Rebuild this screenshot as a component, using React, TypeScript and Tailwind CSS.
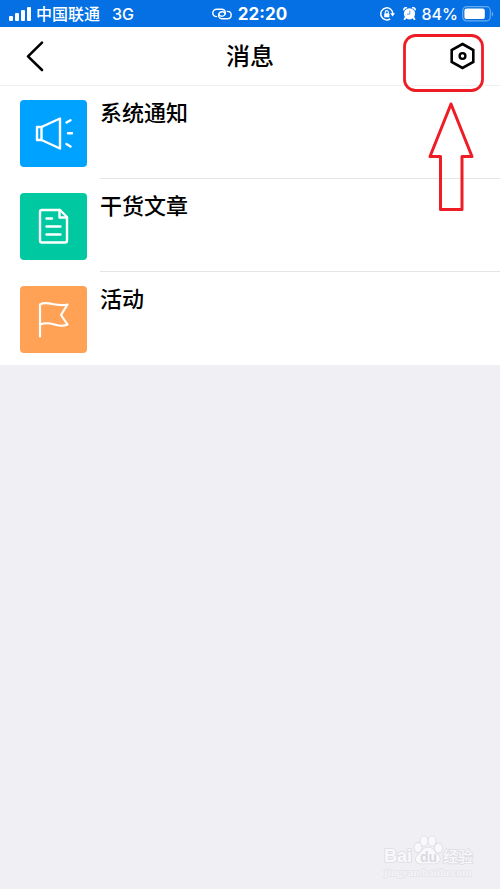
import type { ReactNode } from 'react';

function SignalIcon() {
  return (
    <svg width="22" height="16" viewBox="0 0 22 16" fill="#fff" aria-hidden="true">
      <rect x="0" y="10" width="4" height="5" rx="1" />
      <rect x="6" y="7" width="4" height="8" rx="1" />
      <rect x="12" y="4" width="4" height="11" rx="1" />
      <rect x="18" y="1" width="4" height="14" rx="1" />
    </svg>
  );
}

function LinkIcon() {
  return (
    <svg width="20" height="12" viewBox="0 0 20 12" fill="none" stroke="#fff" strokeWidth="1.4" strokeLinecap="round" aria-hidden="true">
      <path d="M4.6 8.6C2.2 8.6 0.8 7 0.8 4.9C0.8 2.6 2.6 1.2 4.8 1.2H9.4C12 1.2 13.6 3 13.4 5C13.2 7 11.6 8.2 9.6 8.2C8.2 8.2 7.4 7.4 7.2 6.6" />
      <path d="M15.4 3.4C17.8 3.4 19.2 5 19.2 7.1C19.2 9.4 17.4 10.8 15.2 10.8H10.6C8 10.8 6.4 9 6.6 7C6.8 5 8.4 3.8 10.4 3.8C11.8 3.8 12.6 4.6 12.8 5.4" />
    </svg>
  );
}

function RotationLockIcon() {
  return (
    <svg width="15" height="14" viewBox="0 0 15 14" fill="none" stroke="#fff" strokeWidth="1.5" aria-hidden="true">
      <path d="M10.2 11.8A6 6 0 1 1 12.8 7" />
      <path d="M10.2 6.2H15L12.6 9.6Z" fill="#fff" stroke="none" />
      <rect x="4.2" y="6.2" width="5.2" height="4" rx="0.6" fill="#fff" stroke="none" />
      <path d="M5.3 6.4V5.1A1.5 1.5 0 0 1 8.3 5.1V6.4" strokeWidth="1.1" />
    </svg>
  );
}

function AlarmIcon() {
  return (
    <svg width="13" height="13" viewBox="0 0 13 13" aria-hidden="true">
      <circle cx="6.5" cy="6.8" r="5.6" fill="#fff" />
      <path d="M0.9 3.4A2.2 2.2 0 0 1 3.9 0.9M9.1 0.9A2.2 2.2 0 0 1 12.1 3.4" fill="none" stroke="#fff" strokeWidth="1.6" />
      <path d="M2.6 10.6L1.5 12.2M10.4 10.6L11.5 12.2" stroke="#fff" strokeWidth="1.8" strokeLinecap="round" />
      <path d="M6.8 3.6V7.2H4" fill="none" stroke="#5ba2ee" strokeWidth="1" />
    </svg>
  );
}

function BatteryIcon() {
  return (
    <svg width="32" height="16" viewBox="0 0 32 16" aria-hidden="true">
      <rect x="0.7" y="0.7" width="27.6" height="14.2" rx="4" fill="none" stroke="#68a9ef" strokeWidth="1.2" />
      <rect x="2.4" y="2.5" width="20.4" height="10.6" rx="2.2" fill="#fff" />
      <path d="M29.8 5.4A2.8 2.8 0 0 1 29.8 10.4Z" fill="#68a9ef" />
    </svg>
  );
}

function StatusBar() {
  return (
    <div className="grid grid-cols-[1fr_auto_1fr] items-center h-[27px] pl-[9px] pr-[6px] bg-[#0470e4] text-white">
      <div className="flex items-center">
        <SignalIcon />
        <span className="ml-[5px] text-base leading-5 font-medium">中国联通</span>
        <span className="ml-3 text-base leading-5 font-medium">3G</span>
      </div>
      <div className="flex items-center gap-[6px] pr-1">
        <LinkIcon />
        <span className="text-[17px] leading-5 font-bold">22:20</span>
      </div>
      <div className="flex items-center justify-end">
        <RotationLockIcon />
        <span className="ml-2">
          <AlarmIcon />
        </span>
        <span className="ml-[6px] mr-1 text-base leading-5 font-medium">84%</span>
        <BatteryIcon />
      </div>
    </div>
  );
}

function Header() {
  return (
    <header className="flex items-center justify-between h-[59px] pl-[26px] pr-6 border-b border-[#efefef] bg-white">
      <button type="button" aria-label="返回" className="cursor-pointer">
        <svg width="26" height="32" viewBox="0 0 26 32" fill="none" stroke="#000" strokeWidth="2.6" strokeLinecap="round" strokeLinejoin="round">
          <path d="M16 2.6L2 16.4L16 30" />
        </svg>
      </button>
      <h1 className="pt-0.5 text-2xl font-medium">消息</h1>
      <button type="button" aria-label="设置" className="relative cursor-pointer">
        <svg width="28" height="28" viewBox="0 0 28 28" fill="none" stroke="#000" strokeLinejoin="miter">
          <path d="M14.5 2L25.3 8V20L14.5 26L3.7 20V8Z" strokeWidth="2.6" />
          <circle cx="14.5" cy="14" r="2.9" strokeWidth="2.4" />
        </svg>
        {/* highlight frame and arrow around the settings button */}
        <svg className="absolute -top-2 -right-2 pointer-events-none" width="84" height="180" viewBox="0 0 84 180" fill="none" stroke="#ee1c25" strokeWidth="3" aria-hidden="true">
          <rect x="4.5" y="1.5" width="78" height="55" rx="11" strokeWidth="2.8" />
          <path d="M51 70L30 122.5H40.5V175.5H62V122.5H72Z" strokeLinejoin="round" />
        </svg>
      </button>
    </header>
  );
}

function MegaphoneIcon() {
  return (
    <svg width="67" height="67" viewBox="0 0 67 67" fill="none" stroke="#fff" strokeWidth="2.4" strokeLinecap="round" strokeLinejoin="round" aria-hidden="true">
      <path d="M17 27H21.5V40H17Z" />
      <path d="M21.5 27L40 18.5V48.5L21.5 40" />
      <path d="M46.5 22.5L50.5 20.2M48 33.3H52M46.5 44L50.5 46.5" />
    </svg>
  );
}

function ArticleIcon() {
  return (
    <svg width="67" height="67" viewBox="0 0 67 67" fill="none" stroke="#fff" strokeWidth="2.4" strokeLinecap="round" strokeLinejoin="round" aria-hidden="true">
      <path d="M40 17H22A2 2 0 0 0 20 19V47.5A2 2 0 0 0 22 49.5H45A2 2 0 0 0 47 47.5V24Z" />
      <path d="M39.5 17V24.5H46.5" />
      <path d="M26.5 25.5H32M26.5 33.5H40.5M26.5 41.5H40.5" />
    </svg>
  );
}

function FlagIcon() {
  return (
    <svg width="67" height="67" viewBox="0 0 67 67" fill="none" stroke="#fff" strokeWidth="2.2" strokeLinecap="round" strokeLinejoin="round" aria-hidden="true">
      <path d="M20 50.5V18.5C28 14 35 21.5 47.5 18.5L41 29L47.5 38.5C38 43.5 31 33.5 20.5 38.5" />
    </svg>
  );
}

type MessageRowProps = {
  title: string;
  color: string;
  icon: ReactNode;
  last?: boolean;
};

function MessageRow({ title, color, icon, last }: MessageRowProps) {
  return (
    <li>
      <a href="#" className="flex h-[93px] pl-5">
        <div className={`w-[67px] h-[67px] mt-[14px] rounded ${color}`}>{icon}</div>
        <div className={`flex-1 ml-[13px] pt-3 ${last ? '' : 'border-b border-[#e5e5e5]'}`}>
          <span className="block text-[22px] leading-[30px] font-medium">{title}</span>
        </div>
      </a>
    </li>
  );
}

function Watermark() {
  return (
    <svg width="94" height="46" viewBox="0 0 94 46" fill="#f9f9fb" stroke="#dddde2" strokeWidth="1.6" paintOrder="stroke" aria-hidden="true">
      <ellipse cx="36" cy="12.5" rx="3.6" ry="4.6" />
      <ellipse cx="42" cy="6" rx="3.6" ry="4.8" />
      <ellipse cx="50" cy="6" rx="3.6" ry="4.8" />
      <ellipse cx="56.5" cy="13" rx="3.6" ry="4.6" />
      <path d="M46 12.5C51 12.5 52 17 56 20C60 24 57 29 52 28.5H40C34 29 32 24 36 20C40 17 41 12.5 46 12.5Z" />
      <text x="2" y="27" fontSize="18" fontWeight="700" className="font-['Liberation_Sans',sans-serif]">Bai</text>
      <text x="38" y="27" fontSize="14" fontWeight="700" fill="#d9d9df" stroke="none" className="font-['Liberation_Sans',sans-serif]">du</text>
      <text x="61" y="27" fontSize="15" fontWeight="500" className="font-['Liberation_Sans','Noto_Sans_CJK_SC',sans-serif]">经验</text>
      <text x="2" y="41" fontSize="11" fontWeight="700" fill="#f4f4f7" stroke="#e5e5ea" className="font-['Liberation_Serif',serif]">jingyan.baidu.com</text>
    </svg>
  );
}

export default function App() {
  return (
    <div className="flex flex-col min-h-screen bg-[#efeff4] text-black font-['Inter','Noto_Sans_CJK_SC',sans-serif]">
      <StatusBar />
      <Header />
      <main>
        <ul className="bg-white">
          <MessageRow title="系统通知" color="bg-[#00a2ff]" icon={<MegaphoneIcon />} />
          <MessageRow title="干货文章" color="bg-[#00c8a0]" icon={<ArticleIcon />} />
          <MessageRow title="活动" color="bg-[#ffa256]" icon={<FlagIcon />} last />
        </ul>
      </main>
      <footer className="flex justify-end mt-auto pr-6 pb-2">
        <Watermark />
      </footer>
    </div>
  );
}
